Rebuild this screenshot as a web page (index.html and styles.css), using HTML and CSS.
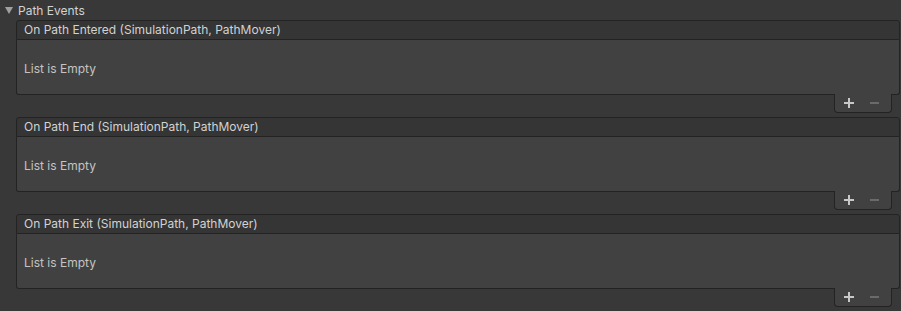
FILE: index.html
```html
<!DOCTYPE html>
<html>
<head>
<meta charset="utf-8">
<link rel="stylesheet" href="styles.css">
</head>
<body>
<div class="foldout">
  <svg class="arrow" width="8" height="7" viewBox="0 0 8 7"><polygon points="0,0 8,0 4,7" fill="#a0a0a0"/></svg>
  <span>Path Events</span>
</div>
<div class="events">
  <div class="event">
    <div class="event-header">On Path Entered (SimulationPath, PathMover)</div>
    <div class="event-body">List is Empty</div>
    <div class="event-footer">
      <div class="tab">
        <svg class="plus" width="10" height="10" viewBox="0 0 10 10"><rect x="0" y="4" width="10" height="2" fill="#c8c8c8"/><rect x="4" y="0" width="2" height="10" fill="#c8c8c8"/></svg>
        <svg class="minus" width="9" height="10" viewBox="0 0 9 10"><rect x="0" y="4" width="9" height="2" fill="#6a6a6a"/></svg>
      </div>
    </div>
  </div>
  <div class="event">
    <div class="event-header">On Path End (SimulationPath, PathMover)</div>
    <div class="event-body">List is Empty</div>
    <div class="event-footer">
      <div class="tab">
        <svg class="plus" width="10" height="10" viewBox="0 0 10 10"><rect x="0" y="4" width="10" height="2" fill="#c8c8c8"/><rect x="4" y="0" width="2" height="10" fill="#c8c8c8"/></svg>
        <svg class="minus" width="9" height="10" viewBox="0 0 9 10"><rect x="0" y="4" width="9" height="2" fill="#6a6a6a"/></svg>
      </div>
    </div>
  </div>
  <div class="event">
    <div class="event-header">On Path Exit (SimulationPath, PathMover)</div>
    <div class="event-body">List is Empty</div>
    <div class="event-footer">
      <div class="tab">
        <svg class="plus" width="10" height="10" viewBox="0 0 10 10"><rect x="0" y="4" width="10" height="2" fill="#c8c8c8"/><rect x="4" y="0" width="2" height="10" fill="#c8c8c8"/></svg>
        <svg class="minus" width="9" height="10" viewBox="0 0 9 10"><rect x="0" y="4" width="9" height="2" fill="#6a6a6a"/></svg>
      </div>
    </div>
  </div>
</div>
</body>
</html>
```
FILE: styles.css
```css
html, body {
  margin: 0;
  padding: 0;
  background: #383838;
  height: 100%;
}
body {
  font-family: Inter, "Noto Sans", sans-serif;
  font-size: 12px;
  color: #d2d2d2;
  overflow: hidden;
}
.foldout {
  height: 20px;
  display: flex;
  align-items: center;
  padding-left: 5px;
  gap: 5px;
  color: #d2d2d2;
}
.arrow {
  display: block;
  margin-top: 0px;
}
.events {
  padding: 0 1px 0 16px;
}
.event {
  margin-bottom: 4px;
}
.event-header {
  height: 18px;
  line-height: 18px;
  border: 1px solid #232323;
  border-radius: 3px 3px 0 0;
  background: #353535;
  padding-left: 7px;
  color: #d2d2d2;
}
.event-body {
  height: 54px;
  border: 1px solid #232323;
  border-top: none;
  border-radius: 0 0 3px 3px;
  background: #414141;
  padding-left: 7px;
  padding-top: 2px;
  box-sizing: content-box;
  display: flex;
  align-items: center;
  height: 52px;
  color: #c4c4c4;
}
.event-footer {
  display: flex;
  justify-content: flex-end;
  padding-right: 8px;
  margin-top: -1px;
}
.tab {
  width: 56px;
  height: 18px;
  background: #414141;
  border: 1px solid #232323;
  border-top: none;
  border-radius: 0 0 4px 4px;
  display: flex;
  align-items: center;
  box-sizing: content-box;
}
.plus {
  display: block;
  margin-left: 9px;
}
.minus {
  display: block;
  margin-left: 16px;
}
```
